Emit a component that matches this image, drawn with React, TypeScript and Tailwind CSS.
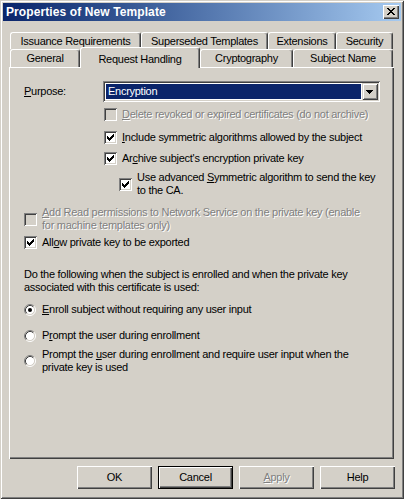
const tabsBack = [
  { label: "Issuance Requirements", w: 131 },
  { label: "Superseded Templates", w: 127 },
  { label: "Extensions", w: 68 },
  { label: "Security", w: 57 },
];

const tabsFront = [
  { label: "General", w: 70 },
  { label: "Request Handling", w: 120, selected: true },
  { label: "Cryptography", w: 93 },
  { label: "Subject Name", w: 100 },
];

const disabledText = "text-[#808080] [text-shadow:1px_1px_0_#ffffff]";

function Tab({ label, w, selected }: { label: string; w: number; selected?: boolean }) {
  return (
    <div
      style={{ width: w }}
      className={`shrink-0 flex justify-center bg-[#d4d0c8] border-l border-t border-white border-r border-r-[#404040] rounded-t-[3px] shadow-[inset_-1px_0_#808080] ${
        selected ? "relative top-[1px] z-10 h-[21px] items-start pt-[3px]" : "h-full items-center"
      }`}
    >
      {label}
    </div>
  );
}

function Check({ checked, disabled }: { checked?: boolean; disabled?: boolean }) {
  return (
    <span
      className={`relative inline-block w-[13px] h-[13px] shrink-0 ${
        disabled ? "bg-[#d4d0c8]" : "bg-white"
      } shadow-[inset_1px_1px_#808080,inset_-1px_-1px_#ffffff,inset_2px_2px_#404040,inset_-2px_-2px_#d4d0c8]`}
    >
      {checked && (
        <svg className="absolute left-[3px] top-[3px]" width="7" height="7" viewBox="0 0 7 7" shapeRendering="crispEdges">
          <path d="M6 0h1v1H6zM5 1h2v1H5zM0 2h1v1H0zM4 2h3v1H4zM0 3h2v1H0zM3 3h3v1H3zM0 4h5v1H0zM1 5h3v1H1zM2 6h1v1H2z" fill="#000" />
        </svg>
      )}
    </span>
  );
}

function Radio({ checked }: { checked?: boolean }) {
  return (
    <svg width="12" height="12" viewBox="0 0 12 12" className="shrink-0">
      <circle cx="6" cy="6" r="4.5" fill="#fff" />
      <path d="M2.11 9.89A5.5 5.5 0 0 1 9.89 2.11" stroke="#808080" fill="none" />
      <path d="M9.89 2.11A5.5 5.5 0 0 1 2.11 9.89" stroke="#ffffff" fill="none" />
      <path d="M2.82 9.18A4.5 4.5 0 0 1 9.18 2.82" stroke="#404040" fill="none" />
      <path d="M9.18 2.82A4.5 4.5 0 0 1 2.82 9.18" stroke="#d4d0c8" fill="none" />
      {checked && <circle cx="6" cy="6" r="2" fill="#000" />}
    </svg>
  );
}

function Button({ children, isDefault }: { children: React.ReactNode; isDefault?: boolean }) {
  return (
    <div
      className={`w-[75px] h-[23px] flex items-center justify-center ${
        isDefault
          ? "shadow-[inset_0_0_0_1px_#000000,inset_2px_2px_#ffffff,inset_-2px_-2px_#404040,inset_-3px_-3px_#808080]"
          : "shadow-[inset_1px_1px_#ffffff,inset_-1px_-1px_#404040,inset_-2px_-2px_#808080]"
      }`}
    >
      {children}
    </div>
  );
}

export default function App() {
  return (
    <div className="w-[404px] h-[499px] bg-[#d4d0c8] p-[3px] flex flex-col text-[11px] tracking-[-0.27px] text-black font-['Liberation_Sans',Arial,sans-serif] shadow-[inset_1px_1px_#d4d0c8,inset_-1px_-1px_#404040,inset_2px_2px_#ffffff,inset_-2px_-2px_#808080]">
      {/* Title bar */}
      <div className="h-[18px] flex items-center justify-between pl-[3px] pr-[2px] bg-linear-to-r from-[#0a246a] to-[#a6caf0]">
        <span className="text-white font-bold text-[12px] tracking-[0.1px]">Properties of New Template</span>
        <div className="w-[16px] h-[14px] bg-[#d4d0c8] relative shadow-[inset_1px_1px_#ffffff,inset_-1px_-1px_#404040,inset_-2px_-2px_#808080]">
          <svg className="absolute left-[4px] top-[3px]" width="8" height="7" viewBox="0 0 8 7" shapeRendering="crispEdges">
            <path d="M0 0h2v1H0zM6 0h2v1H6zM1 1h2v1H1zM5 1h2v1H5zM2 2h4v1H2zM3 3h2v1H3zM2 4h4v1H2zM1 5h2v1H1zM5 5h2v1H5zM0 6h2v1H0zM6 6h2v1H6z" fill="#000" />
          </svg>
        </div>
      </div>

      {/* Tabs */}
      <div className="mt-[11px] h-[17px] flex ml-[7px]">
        {tabsBack.map((t) => (
          <Tab key={t.label} label={t.label} w={t.w} />
        ))}
      </div>
      <div className="h-[18px] flex items-end ml-[7px]">
        {tabsFront.map((t) => (
          <Tab key={t.label} label={t.label} w={t.w} selected={t.selected} />
        ))}
      </div>

      {/* Panel */}
      <div className="ml-[6px] w-[385px] h-[392px] pl-[15px] flex flex-col leading-[13px] shadow-[inset_1px_1px_#ffffff,inset_-1px_-1px_#404040,inset_-2px_-2px_#808080]">
        <div className="mt-[14px] flex items-center">
          <span className="w-[79px]">
            <u>P</u>urpose:
          </span>
          <div className="w-[277px] h-[21px] bg-white p-[3px] pr-[2px] flex shadow-[inset_1px_1px_#808080,inset_-1px_-1px_#ffffff,inset_2px_2px_#404040,inset_-2px_-2px_#d4d0c8]">
            <div className="flex-1 bg-[#0a246a] text-white pl-[2px] flex items-center">Encryption</div>
            <div className="ml-[1px] -mt-[1px] w-[16px] h-[17px] bg-[#d4d0c8] relative shadow-[inset_1px_1px_#d4d0c8,inset_-1px_-1px_#404040,inset_2px_2px_#ffffff,inset_-2px_-2px_#808080]">
              <svg className="absolute left-[4px] top-[7px]" width="7" height="4" viewBox="0 0 7 4" shapeRendering="crispEdges">
                <path d="M0 0h7v1H0zM1 1h5v1H1zM2 2h3v1H2zM3 3h1v1H3z" fill="#000" />
              </svg>
            </div>
          </div>
        </div>

        <div className="mt-[6px] ml-[80px] flex items-center gap-[5px] whitespace-nowrap">
          <Check disabled />
          <span className={disabledText}>
            <u>D</u>elete revoked or expired certificates (do not archive)
          </span>
        </div>
        <div className="mt-[10px] ml-[80px] flex items-center gap-[5px] whitespace-nowrap">
          <Check checked />
          <span>
            <u>I</u>nclude symmetric algorithms allowed by the subject
          </span>
        </div>
        <div className="mt-[8px] ml-[80px] flex items-center gap-[5px] whitespace-nowrap">
          <Check checked />
          <span>
            Ar<u>c</u>hive subject's encryption private key
          </span>
        </div>
        <div className="mt-[6px] ml-[95px] flex items-center gap-[5px] whitespace-nowrap">
          <Check checked />
          <span>
            Use advanced <u>S</u>ymmetric algorithm to send the key
            <br />
            to the CA.
          </span>
        </div>

        <div className="mt-[9px] flex items-center gap-[5px] whitespace-nowrap">
          <Check disabled />
          <span className={disabledText}>
            <u>A</u>dd Read permissions to Network Service on the private key (enable
            <br />
            for machine templates only)
          </span>
        </div>
        <div className="mt-[4px] flex items-center gap-[5px] whitespace-nowrap">
          <Check checked />
          <span>
            All<u>o</u>w private key to be exported
          </span>
        </div>

        <p className="mt-[19px] whitespace-nowrap">
          Do the following when the subject is enrolled and when the private key
          <br />
          associated with this certificate is used:
        </p>

        <div className="mt-[9px] flex items-center gap-[6px] whitespace-nowrap">
          <Radio checked />
          <span>
            <u>E</u>nroll subject without requiring any user input
          </span>
        </div>
        <div className="mt-[13px] flex items-center gap-[6px] whitespace-nowrap">
          <Radio />
          <span>
            P<u>r</u>ompt the user during enrollment
          </span>
        </div>
        <div className="mt-[6px] flex items-center gap-[6px] whitespace-nowrap">
          <Radio />
          <span>
            Prompt the <u>u</u>ser during enrollment and require user input when the
            <br />
            private key is used
          </span>
        </div>
      </div>

      {/* Buttons */}
      <div className="mt-[7px] flex justify-end gap-[6px] pr-[6px]">
        <Button>OK</Button>
        <Button isDefault>Cancel</Button>
        <Button>
          <span className={disabledText}>
            <u>A</u>pply
          </span>
        </Button>
        <Button>Help</Button>
      </div>
    </div>
  );
}
